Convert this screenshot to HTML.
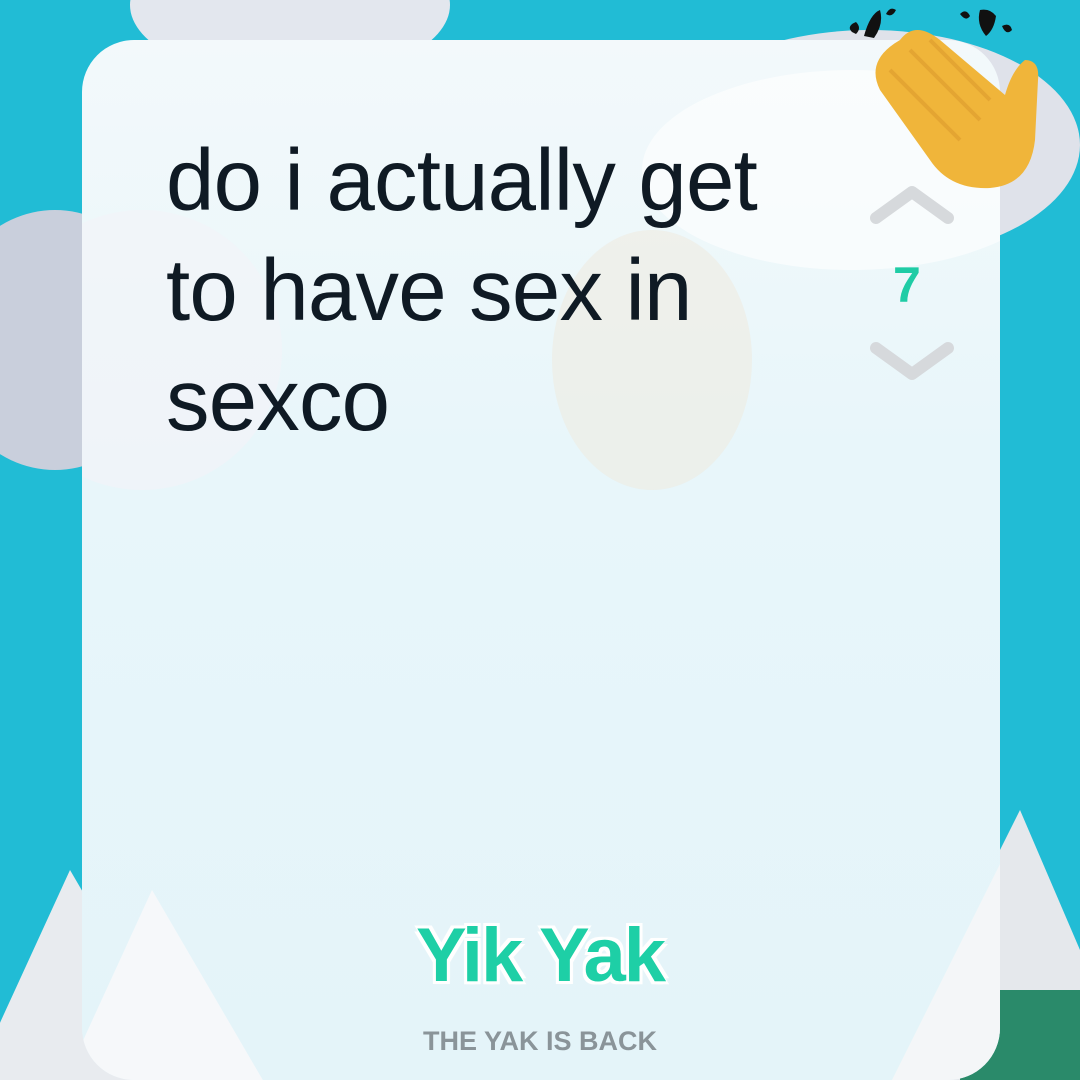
<!DOCTYPE html>
<html><head><style>
html,body{margin:0;width:1080px;height:1080px;overflow:hidden}
body{background:#21bcd5;position:relative;font-family:"Liberation Sans",sans-serif}
.a{position:absolute}
.cl{position:absolute;border-radius:50%;background:#d9dde6}
.card{position:absolute;left:82px;top:40px;width:918px;height:1040px;border-radius:52px;background:linear-gradient(180deg,#f3f9fb 0%,#e8f6fa 40%,#e4f4f9 100%);overflow:hidden}
.txt{position:absolute;left:166px;top:126px;font-size:87px;line-height:110px;color:#0f1a24;letter-spacing:-0.8px}
</style></head><body>
<div class="cl" style="left:130px;top:-70px;width:320px;height:150px;background:#e3e7ee"></div>
<div class="cl" style="left:-60px;top:210px;width:230px;height:260px;background:#c9cfdc"></div>
<div class="cl" style="left:660px;top:30px;width:420px;height:230px;background:#dfe2ea"></div>
<div class="a" style="left:-40px;top:870px;width:0;height:0;border-left:110px solid transparent;border-right:140px solid transparent;border-bottom:240px solid #e8ebef"></div>
<div class="a" style="left:880px;top:810px;width:0;height:0;border-left:140px solid transparent;border-right:120px solid transparent;border-bottom:280px solid #e5e8ec"></div>
<div class="a" style="left:960px;top:990px;width:140px;height:100px;background:#2a8a6a;border-radius:30px 0 0 0"></div>
<div class="card">
 <div class="a" style="left:560px;top:30px;width:420px;height:200px;border-radius:50%;background:#ffffff;opacity:.6"></div>
 <div class="a" style="left:-80px;top:170px;width:280px;height:280px;border-radius:50%;background:#f2f4f8;opacity:.7"></div>
 <div class="a" style="left:470px;top:190px;width:200px;height:260px;border-radius:50%;background:#efe9dc;opacity:.5"></div>
 <div class="a" style="left:-40px;top:850px;width:0;height:0;border-left:110px solid transparent;border-right:140px solid transparent;border-bottom:240px solid #f6f8fa"></div>
 <div class="a" style="left:800px;top:780px;width:0;height:0;border-left:140px solid transparent;border-right:120px solid transparent;border-bottom:280px solid #f4f6f8"></div>
</div>
<div class="txt">do i actually get<br>to have sex in<br>sexco</div>
<svg class="a" style="left:866px;top:184px" width="94" height="200" viewBox="0 0 94 200">
<path d="M10 34 L46 8 L82 34" fill="none" stroke="#d6d9dc" stroke-width="12" stroke-linecap="round" stroke-linejoin="round"/>
<path d="M10 164 L46 190 L82 164" fill="none" stroke="#d6d9dc" stroke-width="12" stroke-linecap="round" stroke-linejoin="round"/>
</svg>
<div class="a" style="left:893px;top:256px;font-size:50px;font-weight:bold;color:#1fcca5">7</div>
<svg class="a" style="left:840px;top:0" width="210" height="200" viewBox="0 0 210 200">
<path d="M24 36 Q30 14 40 10 Q44 24 34 38Z M12 32 Q6 26 16 22 Q22 28 16 34Z M46 14 Q50 6 56 10 Q52 18 46 14Z" fill="#111"/>
<path d="M140 10 Q150 8 156 16 Q154 30 146 36 Q136 24 140 10Z M120 14 Q126 8 130 16 Q126 22 120 14Z M162 26 Q170 22 172 30 Q166 36 162 26Z" fill="#111"/>
<path d="M60 40 Q75 20 100 40 L165 95 Q172 70 185 60 Q200 60 198 80 L195 140 Q190 185 150 188 Q110 190 90 160 L40 90 Q25 60 60 40Z" fill="#f0b53a"/>
<path d="M70 50 L140 120 M50 70 L120 140 M90 40 L150 100" stroke="#d8962a" stroke-width="4" fill="none" opacity=".5"/>
</svg>
<div class="a" style="left:400px;top:912px;width:280px;text-align:center;font-size:76px;font-weight:bold;color:#1ecfa6;letter-spacing:-2px;text-shadow:0 0 6px #fff,3px 3px 0 #fff,-3px -3px 0 #fff,3px -3px 0 #fff,-3px 3px 0 #fff">Yik Yak</div>
<div class="a" style="left:380px;top:1026px;width:320px;text-align:center;font-size:27px;font-weight:bold;color:#8a9499">THE YAK IS BACK</div>
</body></html>
